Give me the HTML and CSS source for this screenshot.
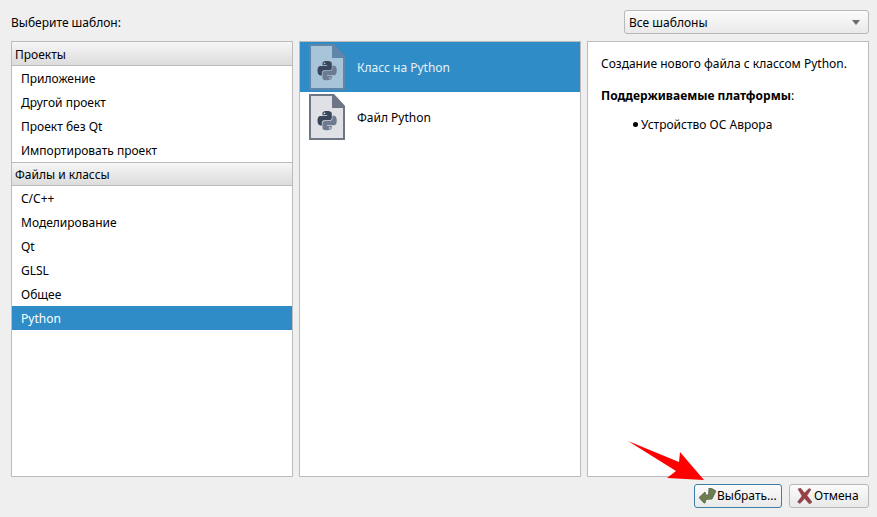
FILE: index.html
```html
<!DOCTYPE html>
<html lang="ru">
<head>
<meta charset="utf-8">
<title>Выберите шаблон</title>
<link rel="stylesheet" href="styles.css">
</head>
<body>
<svg width="0" height="0" class="defs">
  <defs>
    <g id="py">
      <path d="M54.9 0C26.8 0 28.6 12.2 28.6 12.2v12.6h26.8v3.8H17.9S0 26.6 0 54.9s15.6 27.3 15.6 27.3h9.3V69s-.5-15.6 15.4-15.6h26.5s14.9.2 14.9-14.4V14.9S84 0 54.9 0zM40.1 8.5a4.8 4.8 0 1 1 0 9.6 4.8 4.8 0 0 1 0-9.6z" class="py-a"/>
      <path d="M55.1 110c28.1 0 26.3-12.2 26.3-12.2V85.2H54.6v-3.8h37.5S110 83.4 110 55.1s-15.6-27.3-15.6-27.3h-9.3V41s.5 15.6-15.4 15.6H43.2s-14.9-.2-14.9 14.4v24.1S26 110 55.1 110zm14.8-8.5a4.8 4.8 0 1 1 0-9.6 4.8 4.8 0 0 1 0 9.6z" class="py-b"/>
    </g>
  </defs>
</svg>
<div class="dialog">
  <div class="top">
    <span>Выберите шаблон:</span>
    <div class="combo"><span>Все шаблоны</span><i class="caret"></i></div>
  </div>
  <div class="panes">
    <div class="pane categories">
      <div class="group first">Проекты</div>
      <div class="item">Приложение</div>
      <div class="item">Другой проект</div>
      <div class="item">Проект без Qt</div>
      <div class="item">Импортировать проект</div>
      <div class="group">Файлы и классы</div>
      <div class="item">C/C++</div>
      <div class="item">Моделирование</div>
      <div class="item">Qt</div>
      <div class="item">GLSL</div>
      <div class="item">Общее</div>
      <div class="item selected">Python</div>
    </div>
    <div class="pane templates">
      <div class="tpl selected">
        <svg class="page" width="36" height="46" viewBox="0 0 36 46">
          <path class="sheet" d="M1 1H24L35 13V45H1Z"/>
          <path class="fold" d="M23 0H25L36 12V14H23Z"/>
          <use href="#py" transform="translate(8.5 17) scale(.175)"/>
        </svg>
        <span>Класс на Python</span>
      </div>
      <div class="tpl">
        <svg class="page" width="36" height="46" viewBox="0 0 36 46">
          <path class="sheet" d="M1 1H24L35 13V45H1Z"/>
          <path class="fold" d="M23 0H25L36 12V14H23Z"/>
          <use href="#py" transform="translate(8.5 17) scale(.175)"/>
        </svg>
        <span>Файл Python</span>
      </div>
    </div>
    <div class="pane info">
      <p class="lead">Создание нового файла с классом Python.</p>
      <p class="platforms"><b>Поддерживаемые платформы</b>:</p>
      <ul><li>Устройство ОС Аврора</li></ul>
    </div>
  </div>
  <div class="actions">
    <button class="btn focus">
      <svg width="17" height="16" viewBox="0 0 17 16"><path d="M10 0L12 0L17 3L13 11L7 11.500L6 15L5 15L0 9.500L6 4L7 7L9.500 7Z" class="ok"/></svg>
      <span>Выбрать...</span>
    </button>
    <button class="btn cancel">
      <svg width="15" height="16" viewBox="0 0 15 16"><path d="M1 1L3.500 0L7.500 5L12 0.500L14 1.500L10 7.500L15 14L12.500 16L7.500 10.500L3 15.500L0.500 14L5 8Z" class="no"/></svg>
      <span>Отмена</span>
    </button>
  </div>
</div>
<svg class="arrow" width="80" height="44" viewBox="0 0 80 44"><path d="M1 1L52 22L53 12L77 40L40 38L49 31Z"/></svg>
</body>
</html>
```
FILE: styles.css
```css
* { box-sizing: border-box; }
html, body { margin: 0; height: 100%; }
body {
  background: #efefef;
  color: #000;
  font: 12px/16px "Noto Sans", "Open Sans", sans-serif;
  position: relative;
  overflow: hidden;
}
.defs { position: absolute; }
.dialog {
  height: 517px;
  padding: 10px 8px 9px 11px;
  display: flex;
  flex-direction: column;
}
.top {
  height: 24px;
  display: flex;
  align-items: center;
  justify-content: space-between;
  margin-bottom: 7px;
  padding-top: 1px;
}
.combo {
  width: 245px;
  height: 24px;
  margin-top: -1px;
  border: 1px solid #b8b8b8;
  border-radius: 3px;
  background: linear-gradient(#fbfbfb, #e9e9e9);
  padding: 1px 8px 0 4px;
  display: flex;
  align-items: center;
  justify-content: space-between;
}
.caret {
  width: 0;
  height: 0;
  border-left: 4px solid transparent;
  border-right: 4px solid transparent;
  border-top: 5px solid #6b6b6b;
}
.panes {
  height: 436px;
  display: grid;
  grid-template-columns: 282px 282px 282px;
  column-gap: 6px;
}
.pane {
  background: #fff;
  border: 1px solid #bcbcbc;
  overflow: hidden;
}
.group {
  height: 24px;
  padding: 1px 3px 0;
  display: flex;
  align-items: center;
  background: linear-gradient(#f6f6f6, #dcdcdc);
  border-top: 1px solid #bcbcbc;
  border-bottom: 1px solid #bcbcbc;
}
.group.first {
  height: 24px;
  padding-top: 2px;
  border-top: 0;
}
.item {
  height: 24px;
  padding: 1px 9px 0;
  display: flex;
  align-items: center;
}
.item.selected, .tpl.selected {
  background: #308cc6;
  color: #fff;
}
.tpl {
  height: 50px;
  padding-left: 9px;
  display: flex;
  align-items: center;
  column-gap: 12px;
}
.tpl span { padding-top: 1px; }
.page { flex: none; }
.sheet { fill: #dfe1e6; stroke: #6e7585; stroke-width: 2; }
.fold { fill: #6e7585; }
.py-a { fill: #39465c; }
.py-b { fill: #6d7a90; }
.tpl.selected .sheet { fill: #a8c4d9; stroke: #5f86a8; }
.tpl.selected .fold { fill: #5f86a8; }
.tpl.selected .py-a { fill: #33597f; }
.tpl.selected .py-b { fill: #6289ab; }
.tpl.selected span { color: #e6f1f8; }
.info { padding: 14px 13px; }
.info p { margin: 0; }
.lead { margin-bottom: 16px !important; }
.info ul {
  list-style: none;
  margin: 13px 0 0;
  padding: 0 0 0 32px;
}
.info li::before {
  content: "";
  display: inline-block;
  width: 5px;
  height: 5px;
  border-radius: 50%;
  background: #000;
  margin-right: 3px;
  vertical-align: 2px;
}
.actions {
  margin-top: 7px;
  display: flex;
  justify-content: flex-end;
  column-gap: 7px;
}
.btn {
  height: 24px;
  border: 1px solid #b8b8b8;
  border-radius: 3px;
  background: linear-gradient(#fbfbfb, #e9e9e9);
  font: inherit;
  color: #000;
  display: flex;
  align-items: center;
  justify-content: flex-start;
}
.btn.focus { width: 88px; border-color: #3b7ea6; padding: 0 0 0 4px; column-gap: 1px; }
.btn.cancel { width: 80px; padding: 0 0 0 7px; column-gap: 2px; }
.ok { fill: #6c7d52; stroke: #4f5c3c; stroke-width: .7; }
.no { fill: #9c3f44; stroke: #6f4a4c; stroke-width: .5; }
.arrow {
  position: absolute;
  left: 627px;
  top: 440px;
}
.arrow path { fill: #ff0000; }
```
